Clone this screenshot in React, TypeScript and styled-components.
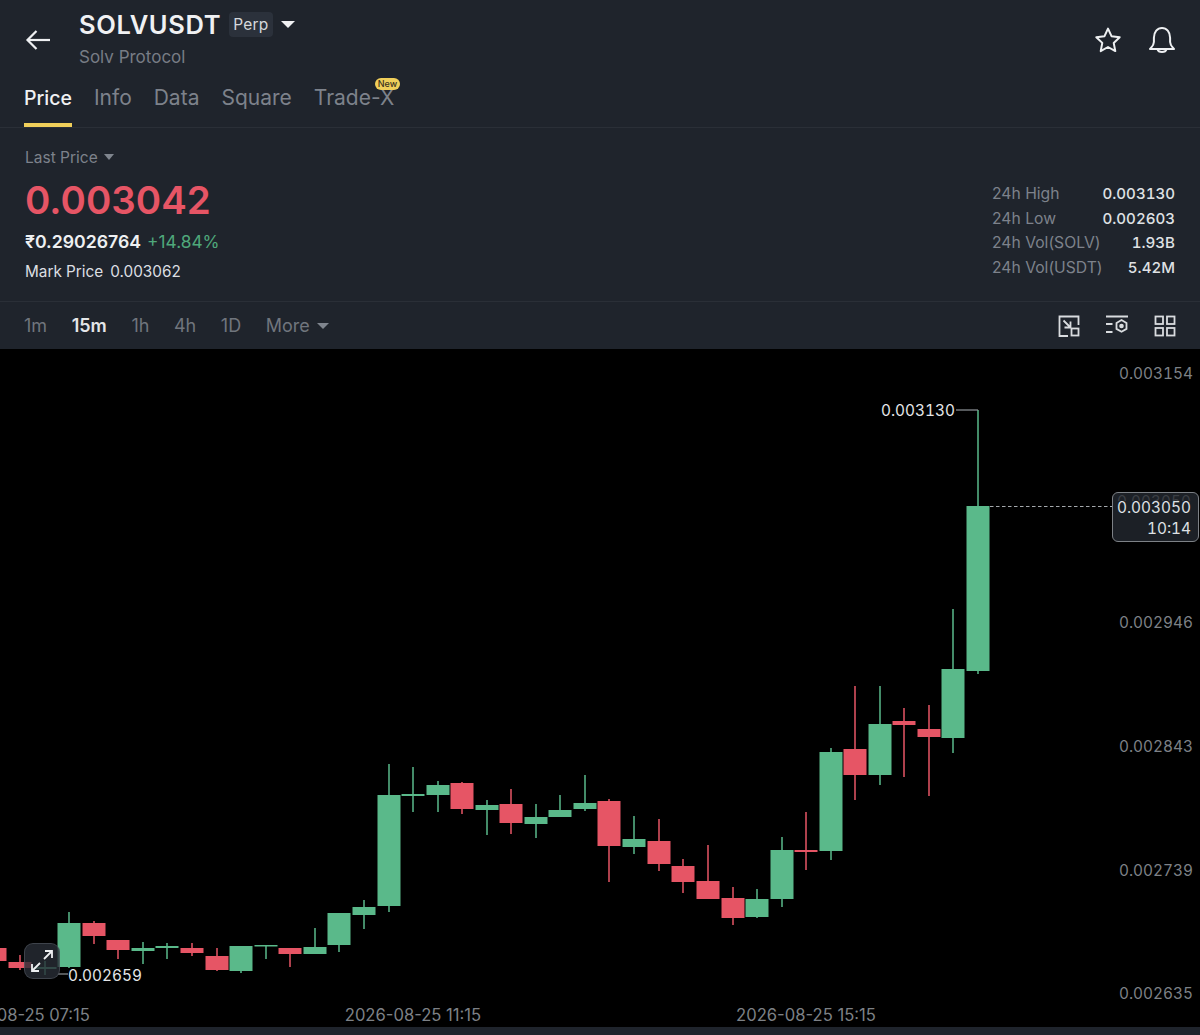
import styled, { createGlobalStyle } from 'styled-components'

type Candle = { x: number, top: number, bottom: number, high: number, low: number, up: boolean }

const candles: Candle[] = [
    { x: -5, top: 948, bottom: 961, high: 948, low: 961, up: false },
    { x: 20, top: 962, bottom: 968, high: 955, low: 970, up: false },
    { x: 45, top: 967, bottom: 969, high: 961, low: 975, up: true },
    { x: 69, top: 923, bottom: 967, high: 912, low: 968, up: true },
    { x: 94, top: 923, bottom: 936, high: 921, low: 944, up: false },
    { x: 118, top: 940, bottom: 950, high: 940, low: 959, up: false },
    { x: 143, top: 948, bottom: 951, high: 942, low: 964, up: true },
    { x: 167, top: 946, bottom: 948, high: 943, low: 959, up: true },
    { x: 192, top: 948, bottom: 953, high: 943, low: 956, up: false },
    { x: 217, top: 956, bottom: 970, high: 948, low: 971, up: false },
    { x: 241, top: 946, bottom: 971, high: 946, low: 973, up: true },
    { x: 266, top: 945, bottom: 946, high: 945, low: 959, up: true },
    { x: 290, top: 948, bottom: 954, high: 948, low: 967, up: false },
    { x: 315, top: 947, bottom: 954, high: 928, low: 954, up: true },
    { x: 339, top: 913, bottom: 945, high: 913, low: 952, up: true },
    { x: 364, top: 907, bottom: 915, high: 900, low: 929, up: true },
    { x: 389, top: 795, bottom: 906, high: 764, low: 912, up: true },
    { x: 413, top: 794, bottom: 796, high: 767, low: 812, up: true },
    { x: 438, top: 785, bottom: 795, high: 781, low: 812, up: true },
    { x: 462, top: 783, bottom: 809, high: 782, low: 814, up: false },
    { x: 487, top: 805, bottom: 810, high: 800, low: 835, up: true },
    { x: 511, top: 804, bottom: 823, high: 789, low: 834, up: false },
    { x: 536, top: 817, bottom: 824, high: 804, low: 838, up: true },
    { x: 560, top: 810, bottom: 817, high: 795, low: 817, up: true },
    { x: 585, top: 803, bottom: 809, high: 775, low: 811, up: true },
    { x: 609, top: 801, bottom: 846, high: 799, low: 882, up: false },
    { x: 634, top: 839, bottom: 847, high: 816, low: 854, up: true },
    { x: 659, top: 841, bottom: 864, high: 819, low: 871, up: false },
    { x: 683, top: 866, bottom: 882, high: 859, low: 893, up: false },
    { x: 708, top: 881, bottom: 899, high: 845, low: 899, up: false },
    { x: 733, top: 898, bottom: 918, high: 887, low: 925, up: false },
    { x: 757, top: 899, bottom: 917, high: 889, low: 918, up: true },
    { x: 782, top: 850, bottom: 899, high: 837, low: 907, up: true },
    { x: 806, top: 850, bottom: 852, high: 812, low: 870, up: false },
    { x: 831, top: 752, bottom: 851, high: 748, low: 860, up: true },
    { x: 855, top: 749, bottom: 775, high: 686, low: 800, up: false },
    { x: 880, top: 724, bottom: 775, high: 686, low: 785, up: true },
    { x: 904, top: 721, bottom: 725, high: 708, low: 777, up: false },
    { x: 929, top: 729, bottom: 737, high: 705, low: 796, up: false },
    { x: 953, top: 669, bottom: 738, high: 609, low: 753, up: true },
    { x: 978, top: 506, bottom: 671, high: 410, low: 674, up: true },
]

const priceLevels = [
    { label: '0.003154', y: 373 },
    { label: '0.002946', y: 622 },
    { label: '0.002843', y: 746 },
    { label: '0.002739', y: 870 },
    { label: '0.002635', y: 993 },
]

const timeLabels = [
    { label: '2026-08-25 07:15', x: 19 },
    { label: '2026-08-25 11:15', x: 413 },
    { label: '2026-08-25 15:15', x: 806 },
]

const stats = [
    { label: '24h High', value: '0.003130' },
    { label: '24h Low', value: '0.002603' },
    { label: '24h Vol(SOLV)', value: '1.93B' },
    { label: '24h Vol(USDT)', value: '5.42M' },
]

const GREEN = '#5ab98a'
const RED = '#e65565'

export default function App() {
    return (
        <>
            <GlobalStyle />
            <Page>
                <Header>
                    <TitleRow>
                        <BackButton>
                            <svg width="28" height="24" viewBox="0 0 28 24" fill="none" stroke="#eef0f2" strokeWidth="2.2">
                                <path d="M26 12H3.500" />
                                <path d="M12.500 3 3.500 12l9 9" />
                            </svg>
                        </BackButton>
                        <TitleBlock>
                            <SymbolRow>
                                <Symbol>SOLVUSDT</Symbol>
                                <PerpBadge>Perp</PerpBadge>
                                <Caret $size={7} $color="#f0f1f3" />
                            </SymbolRow>
                            <Subtitle>Solv Protocol</Subtitle>
                        </TitleBlock>
                        <HeaderActions>
                            <svg width="30" height="30" viewBox="0 0 30 30" fill="none" stroke="#eef0f2" strokeWidth="2" strokeLinejoin="round">
                                <path d="m15 3.600 3.500 7.600 8.200 1-6 5.700 1.600 8.200-7.300-4.100-7.300 4.100 1.600-8.200-6-5.700 8.200-1z" />
                            </svg>
                            <svg width="30" height="30" viewBox="0 0 30 30" fill="none" stroke="#eef0f2" strokeWidth="2" strokeLinejoin="round">
                                <path d="M3 24c2-2.200 3.900-3.800 3.900-7v-4.200C6.900 7 10.400 3 15 3s8.100 4 8.100 9.800V17c0 3.200 1.900 4.800 3.900 7z" />
                                <path d="M10.500 24.200c.5 1.900 2.300 2.800 4.500 2.800s4-.9 4.500-2.800" />
                            </svg>
                        </HeaderActions>
                    </TitleRow>
                    <Tabs>
                        <Tab $active>Price</Tab>
                        <Tab>Info</Tab>
                        <Tab>Data</Tab>
                        <Tab>Square</Tab>
                        <Tab>
                            Trade-X
                            <NewBadge>New</NewBadge>
                        </Tab>
                    </Tabs>
                </Header>

                <Summary>
                    <PriceColumn>
                        <LastPrice>
                            Last Price
                            <Caret $size={5.500} $color="#7f858e" />
                        </LastPrice>
                        <BigPrice>0.003042</BigPrice>
                        <FiatRow>
                            <Fiat>₹0.29026764</Fiat>
                            <Change>+14.84%</Change>
                        </FiatRow>
                        <MarkRow>
                            <span>Mark Price</span>
                            <span>0.003062</span>
                        </MarkRow>
                    </PriceColumn>
                    <StatsGrid>
                        {stats.map((item) => (
                            <StatRow key={item.label}>
                                <StatLabel>{item.label}</StatLabel>
                                <StatValue>{item.value}</StatValue>
                            </StatRow>
                        ))}
                    </StatsGrid>
                </Summary>

                <Intervals>
                    <IntervalList>
                        <Interval>1m</Interval>
                        <Interval $active>15m</Interval>
                        <Interval>1h</Interval>
                        <Interval>4h</Interval>
                        <Interval>1D</Interval>
                        <Interval>
                            More
                            <Caret $size={6} $color="#7f858e" />
                        </Interval>
                    </IntervalList>
                    <ToolIcons>
                        <svg width="22" height="22" viewBox="0 0 22 22" fill="none" stroke="#d9dcdf" strokeWidth="1.800">
                            <path d="M10 21H1.500V1.500h19V10" />
                            <path d="M5.500 5.500 12 12M12.500 6.500v6h-6" />
                            <rect x="13.500" y="13.500" width="7" height="7" />
                        </svg>
                        <svg width="22" height="22" viewBox="0 0 22 22" fill="none" stroke="#d9dcdf" strokeWidth="1.800">
                            <path d="M0 1.500h22M0 9h6.500M0 17h6.500" />
                            <path d="m15.500 5 5 2.900v6l-5 2.900-5-2.900v-6z" />
                            <circle cx="15.500" cy="11" r="1.400" fill="#d9dcdf" />
                        </svg>
                        <svg width="22" height="22" viewBox="0 0 22 22" fill="none" stroke="#d9dcdf" strokeWidth="1.800">
                            <rect x="1.500" y="1.500" width="7.500" height="7.500" />
                            <rect x="13" y="1.500" width="7.500" height="7.500" />
                            <rect x="1.500" y="13" width="7.500" height="7.500" />
                            <rect x="13" y="13" width="7.500" height="7.500" />
                        </svg>
                    </ToolIcons>
                </Intervals>

                <Chart>
                    <ChartSvg viewBox="0 349 1200 678" width="1200" height="678">
                        {candles.map((c) => {
                            const color = c.up ? GREEN : RED
                            return (
                                <g key={c.x} fill={color}>
                                    <rect x={c.x - 0.750} y={c.high} width="1.500" height={c.low - c.high} />
                                    <rect x={c.x - 11.500} y={c.top} width="23" height={Math.max(c.bottom - c.top, 1.500)} />
                                </g>
                            )
                        })}

                        <path d="M978 410H956" stroke="#8f9499" strokeWidth="1.200" fill="none" />
                        <AxisText x="955" y="416" textAnchor="end" $color="#e4e6e8">0.003130</AxisText>
                        <path d="M68 974H58" stroke="#8f9499" strokeWidth="1.200" fill="none" />
                        <AxisText x="68" y="981" $color="#e4e6e8">0.002659</AxisText>

                        <path d="M990 506.500H1112" stroke="#a4a8ac" strokeWidth="1.200" strokeDasharray="3.500 2.500" fill="none" />

                        {priceLevels.map((item) => (
                            <AxisText key={item.label} x="1193" y={item.y + 6} textAnchor="end" $color="#7d8186">{item.label}</AxisText>
                        ))}
                        {timeLabels.map((item) => (
                            <TimeText key={item.label} x={item.x} y="1021" textAnchor="middle">{item.label}</TimeText>
                        ))}
                    </ChartSvg>

                    <PriceTag>
                        <GhostPrice>0.003050</GhostPrice>
                        <TagLine>0.003050</TagLine>
                        <TagLine>10:14</TagLine>
                    </PriceTag>

                    <ExpandButton>
                        <svg width="26" height="26" viewBox="0 0 26 26" fill="none" stroke="#eef0f2" strokeWidth="1.800">
                            <path d="M3 23 11 15M3 16v7h7" />
                            <path d="M23 3 15 11M16 3h7v7" />
                        </svg>
                    </ExpandButton>
                </Chart>
                <BottomStrip />
            </Page>
        </>
    )
}

const GlobalStyle = createGlobalStyle`
    * {
        box-sizing: border-box;
    }
    html, body {
        margin: 0;
        padding: 0;
        background: #000;
    }
`

const Page = styled.div`
    width: 1200px;
    height: 1035px;
    overflow: hidden;
    display: flex;
    flex-direction: column;
    background: #1f242c;
    font-family: Inter, "Noto Sans", sans-serif;
    color: #eef0f2;
`

const Header = styled.header`
    height: 128px;
    padding: 0 24px;
    display: flex;
    flex-direction: column;
    justify-content: space-between;
    border-bottom: 1px solid #2a2f37;
`

const TitleRow = styled.div`
    display: flex;
    align-items: flex-start;
    padding-top: 8px;
`

const BackButton = styled.div`
    width: 55px;
    padding-top: 20px;
    display: flex;
`

const TitleBlock = styled.div`
    display: flex;
    flex-direction: column;
    gap: 7px;
`

const SymbolRow = styled.div`
    display: flex;
    align-items: center;
    height: 32px;
`

const Symbol = styled.div`
    margin-right: 8px;
    font-size: 25.500px;
    font-weight: 600;
    letter-spacing: 0.65px;
    color: #f0f1f3;
`

const PerpBadge = styled.div`
    height: 25px;
    margin-right: 8px;
    padding: 0 4px;
    display: flex;
    align-items: center;
    border-radius: 4px;
    background: #2b313b;
    font-size: 15.500px;
    letter-spacing: 0.2px;
    color: #d6d9dd;
`

const Caret = styled.span<{ $size: number, $color: string }>`
    display: inline-block;
    width: 0;
    height: 0;
    border-left: ${props => props.$size}px solid transparent;
    border-right: ${props => props.$size}px solid transparent;
    border-top: ${props => props.$size * 1.1}px solid ${props => props.$color};
`

const Subtitle = styled.div`
    font-size: 17px;
    color: #777c85;
`

const HeaderActions = styled.div`
    margin-left: auto;
    margin-right: -1px;
    padding-top: 17px;
    display: flex;
    gap: 24px;
`

const Tabs = styled.nav`
    display: flex;
    gap: 22px;
`

const Tab = styled.div<{ $active?: boolean }>`
    position: relative;
    height: 42px;
    font-size: ${props => props.$active ? 19.5 : 21}px;
    line-height: 26px;
    font-weight: ${props => props.$active ? 500 : 400};
    color: ${props => props.$active ? '#f0f1f3' : '#7d828b'};
    border-bottom: 4px solid ${props => props.$active ? '#f0cf5a' : 'transparent'};
`

const NewBadge = styled.span`
    position: absolute;
    top: -7px;
    right: -6px;
    height: 12px;
    padding: 0 3px;
    display: flex;
    align-items: center;
    border-radius: 6px;
    background: #f0cf5a;
    font-size: 9px;
    font-weight: 500;
    color: #3a3320;
`

const Summary = styled.section`
    height: 174px;
    padding: 19px 25px 0 25px;
    display: flex;
    justify-content: space-between;
    border-bottom: 1px solid #2a2f37;
`

const PriceColumn = styled.div`
    display: flex;
    flex-direction: column;
`

const LastPrice = styled.div`
    display: flex;
    align-items: center;
    gap: 6px;
    height: 20px;
    font-size: 15.500px;
    color: #7d828b;
`

const BigPrice = styled.div`
    margin-top: 10px;
    height: 46px;
    font-size: 38.500px;
    font-weight: 600;
    line-height: 46px;
    color: #e65565;
`

const FiatRow = styled.div`
    margin-top: 8px;
    display: flex;
    align-items: baseline;
    gap: 6px;
    height: 22px;
`

const Fiat = styled.span`
    font-size: 17.700px;
    font-weight: 600;
    color: #eef0f2;
`

const Change = styled.span`
    font-size: 17.300px;
    color: #4fa87b;
`

const MarkRow = styled.div`
    margin-top: 9px;
    display: flex;
    gap: 7px;
    font-size: 15.300px;
    color: #dcdfe2;
`

const StatsGrid = styled.div`
    width: 183px;
    margin-top: 37px;
    display: flex;
    flex-direction: column;
    gap: 5.500px;
`

const StatRow = styled.div`
    height: 19px;
    display: flex;
    justify-content: space-between;
    align-items: center;
`

const StatLabel = styled.span`
    font-size: 15.700px;
    color: #7d828b;
`

const StatValue = styled.span`
    font-size: 15.100px;
    font-weight: 500;
    font-variant-numeric: tabular-nums;
    color: #dfe1e4;
`

const Intervals = styled.div`
    height: 47px;
    padding: 0 24px;
    display: flex;
    align-items: center;
    justify-content: space-between;
`

const IntervalList = styled.div`
    display: flex;
    align-items: center;
    gap: 24.600px;
`

const Interval = styled.div<{ $active?: boolean }>`
    display: flex;
    align-items: center;
    gap: 7px;
    font-size: 18px;
    font-weight: ${props => props.$active ? 600 : 400};
    color: ${props => props.$active ? '#e4e6e8' : '#70757d'};
`

const ToolIcons = styled.div`
    display: flex;
    gap: 26px;
`

const Chart = styled.main`
    position: relative;
    height: 678px;
    background: #000;
`

const ChartSvg = styled.svg`
    display: block;
`

const AxisText = styled.text<{ $color: string }>`
    font-family: Inter, "Noto Sans", sans-serif;
    font-size: 15.400px;
    font-variant-numeric: tabular-nums;
    fill: ${props => props.$color};
`

const TimeText = styled.text`
    font-family: Inter, "Noto Sans", sans-serif;
    font-size: 16.600px;
    fill: #7d8186;
`

const PriceTag = styled.div`
    position: absolute;
    top: 143px;
    right: 1px;
    width: 87px;
    height: 50px;
    padding: 4px 7px 0 0;
    display: flex;
    flex-direction: column;
    align-items: flex-end;
    border: 1px solid #7d8186;
    border-radius: 6px;
    background: #1c2026;
    font-size: 15.400px;
    font-variant-numeric: tabular-nums;
    line-height: 21px;
    color: #dfe1e4;
`

const TagLine = styled.span`
    position: relative;
`

const GhostPrice = styled.span`
    position: absolute;
    top: -2px;
    right: 7px;
    color: #3a3e44;
    clip-path: inset(0 0 11px 0);
`

const ExpandButton = styled.div`
    position: absolute;
    left: 24px;
    top: 594px;
    width: 36px;
    height: 36px;
    display: flex;
    align-items: center;
    justify-content: center;
    border: 1px solid rgba(120, 125, 135, 0.35);
    border-radius: 9px;
    background: rgba(40, 45, 54, 0.8);
`

const BottomStrip = styled.div`
    height: 8px;
    background: #1f242c;
`
